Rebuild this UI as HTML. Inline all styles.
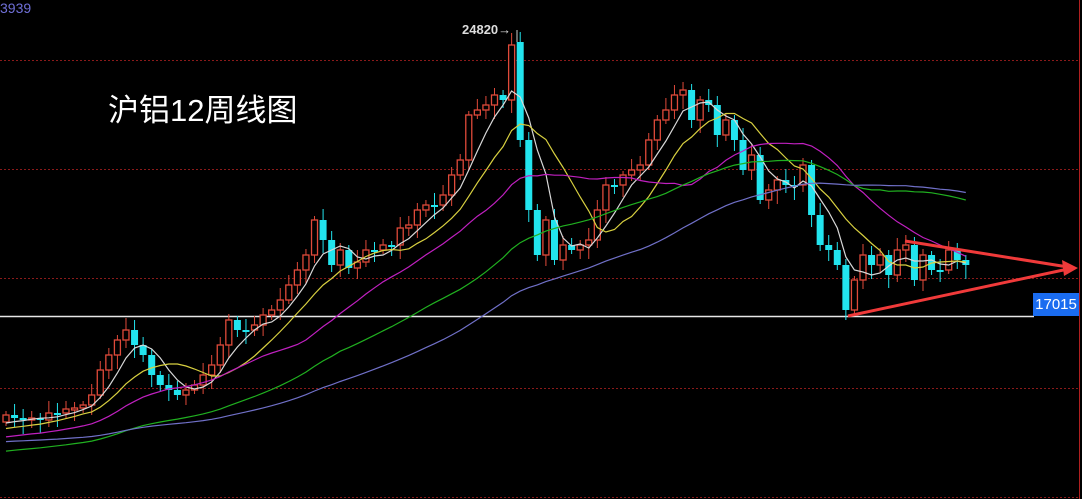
<!DOCTYPE html>
<html><head><meta charset="utf-8"><style>
html,body{margin:0;padding:0;background:#000;width:1082px;height:499px;overflow:hidden}
svg{position:absolute;left:0;top:0}
.t{position:absolute;font-family:"Liberation Sans","Noto Sans CJK SC",sans-serif;white-space:nowrap}
</style></head><body>
<svg id="s" width="1082" height="499" viewBox="0 0 1082 499">
<g stroke="#8a1a1a" stroke-dasharray="2,2" stroke-width="1">
<line x1="0" y1="60.5" x2="1078" y2="60.5"/><line x1="0" y1="169.5" x2="1078" y2="169.5"/>
<line x1="0" y1="278.5" x2="1078" y2="278.5"/><line x1="0" y1="388.5" x2="1078" y2="388.5"/>
<line x1="0" y1="497.5" x2="1078" y2="497.5"/></g>
<line x1="1079.5" y1="0" x2="1079.5" y2="499" stroke="#b02020"/>
<line x1="0" y1="316.5" x2="1034" y2="316.5" stroke="#e8e8e8" stroke-width="1.5"/>
<g id="c"></g><g id="m"></g>
<g stroke="#f03a3a" stroke-width="3" fill="none">
<line x1="905" y1="241" x2="1068" y2="267"/><line x1="848" y1="316" x2="1068" y2="269"/></g>
<polygon points="1078,268 1062,260 1064,276" fill="#f03a3a"/>
<line x1="517" y1="30" x2="517" y2="42" stroke="#ccc"/>
</svg>
<div class="t" style="left:0;top:0;font-size:14px;color:#7070d8">3939</div>
<div class="t" style="left:462px;top:22px;font-size:13px;font-weight:bold;color:#ddd">24820→</div>
<div class="t" style="left:108px;top:85px;font-size:31px;color:#fff">沪铝12周线图</div>
<div class="t" style="left:1033px;top:293px;width:46px;height:23px;background:#1a6cf0;color:#fff;font-size:15px;line-height:23px;text-align:center">17015</div>
<script>
(function(){
var C=[415,418,420,418,420,413,413,409,408,405,395,370,355,340,330,345,355,375,385,390,395,390,385,375,365,345,320,330,330,325,315,310,300,285,270,255,220,240,265,250,268,262,250,250,245,245,228,225,210,205,205,195,175,160,115,110,105,95,100,45,140,210,255,220,260,245,250,245,240,210,185,185,175,170,165,140,120,110,95,90,120,100,105,135,120,140,170,155,200,190,180,185,185,165,215,245,250,265,310,280,255,265,255,275,250,245,280,255,270,270,250,260,265];
var ns="http://www.w3.org/2000/svg",g=document.getElementById('c'),m=document.getElementById('m');
function el(t,a,p){var e=document.createElementNS(ns,t);for(var k in a)e.setAttribute(k,a[k]);p.appendChild(e);return e}
var step=8.57,x0=6,prev=422;
for(var i=0;i<C.length;i++){var x=x0+i*step,o=prev,c=C[i];if(i==60)o=42;var up=c<o;var yt=Math.min(o,c),yb=Math.max(o,c);if(yb-yt<2)yb=yt+2;
var h=yt-4-(i*7%9),l=yb+4+(i*5%11);var col=up?'#e04a3a':'#22e4ee';
el('line',{x1:x,y1:h,x2:x,y2:l,stroke:col,'stroke-width':1},g);
if(up)el('rect',{x:x-3,y:yt,width:6,height:yb-yt,fill:'#000',stroke:col,'stroke-width':1.3},g);
else el('rect',{x:x-3.5,y:yt,width:7,height:yb-yt,fill:col},g);prev=c;}
var mas=[[5,'#d8d8d8',425],[10,'#d8d040',430],[20,'#c020c0',438],[40,'#20b020',452],[60,'#7070c8',442]];
mas.forEach(function(a){var n=a[0],pts=[];for(var i=0;i<C.length;i++){var s=0,k=0;for(var j=Math.max(0,i-n+1);j<=i;j++){s+=C[j];k++}
var pad=n-k;s+=pad*a[2];pts.push((x0+i*step).toFixed(1)+','+(s/n).toFixed(1))}
el('polyline',{points:pts.join(' '),fill:'none',stroke:a[1],'stroke-width':1.2},m)});
})();
</script>
</body></html>
